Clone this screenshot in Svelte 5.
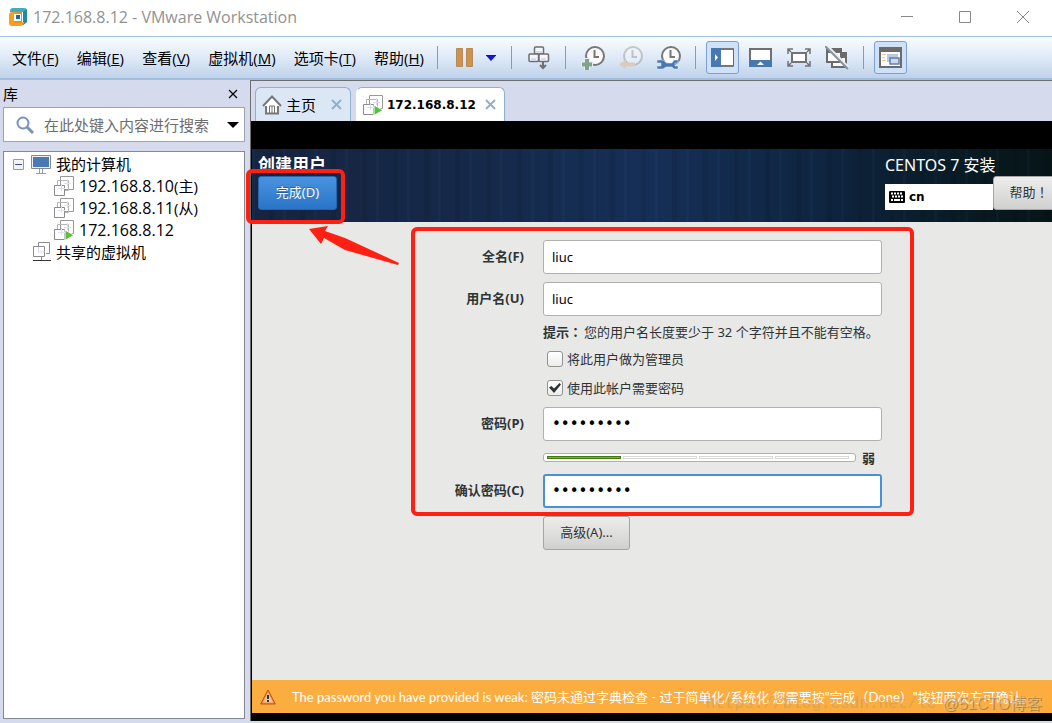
<script lang="ts">
	const menus = [
		{ label: '文件', key: 'F' },
		{ label: '编辑', key: 'E' },
		{ label: '查看', key: 'V' },
		{ label: '虚拟机', key: 'M' },
		{ label: '选项卡', key: 'T' },
		{ label: '帮助', key: 'H' }
	];

	const machines = [
		{ ip: '192.168.8.10', role: '(主)', running: false },
		{ ip: '192.168.8.11', role: '(从)', running: false },
		{ ip: '172.168.8.12', role: '', running: true }
	];

	let fullName = $state('liuc');
	let userName = $state('liuc');
	let password = $state('liuc12345');
	let confirm = $state('liuc12345');
	let isAdmin = $state(false);
	let needsPassword = $state(true);

	// Filled segments of the strength bar, out of four
	const strength = 1;
</script>

{#snippet vmIcon(running: boolean)}
	<svg width="20" height="20" viewBox="0 0 20 20" fill="none" aria-hidden="true">
		<path d="M6.500 9V.500h13v13H11" fill="#fff" stroke="#999" />
		<path d="M3.500 9V4.500h11v10H11" stroke="#b5b5b5" />
		<path d="M.500 9.500h10v10H.500z" fill="#fff" stroke="#8c8c8c" />
		<path d="M7.500 8v7M4 12.500h7M13.500 3v7M10 7.500h7" stroke="#dde0f4" />
		{#if running}
			<path d="M11 10v10.500l9-5.250z" fill="#5abf3c" stroke="#fff" />
		{/if}
	</svg>
{/snippet}

{#snippet clock(faded: boolean)}
	<g opacity={faded ? 0.35 : 1}>
		<circle cx="14" cy="10" r="9" fill="#fafafa" stroke="#777" stroke-width="2" />
		<path d="M13.500 4v7H18" stroke="#777" stroke-width="2" />
	</g>
{/snippet}

<div class="window">
	<header class="titlebar">
		<svg width="20" height="20" viewBox="0 0 20 20" fill="none" aria-hidden="true">
			<path d="M5 1h11q3 0 3 3v11l-4 3V5H2V4q0-3 3-3z" fill="#3fabc4" />
			<path d="M15 5l4-3v13l-4 3z" fill="#1f8ba6" />
			<path d="M4 5h10v4H6v6h10v1q-1 3-4 3H4q-3 0-3-3V8q0-3 3-3z" fill="#f6a11d" />
			<path d="M7 5h7v11H6v-4h4V8H7z" fill="#ee8d17" />
			<path d="M6 7h7v7H6z" fill="#fff" />
			<path d="M8 8h4v4H8z" fill="#176f91" />
		</svg>
		<h1>172.168.8.12 - VMware Workstation</h1>
		<div class="window-controls">
			<button aria-label="最小化"><svg width="14" height="14" viewBox="0 0 14 14"><path d="M1 6.500h12" /></svg></button>
			<button aria-label="最大化"><svg width="14" height="14" viewBox="0 0 14 14"><path d="M1.500 1.500h11v11h-11z" /></svg></button>
			<button aria-label="关闭"><svg width="14" height="14" viewBox="0 0 14 14"><path d="M1 1l12 12M13 1L1 13" /></svg></button>
		</div>
	</header>

	<div class="menubar">
		<nav>
			{#each menus as { label, key }}
				<button class="menu">{label}(<u>{key}</u>)</button>
			{/each}
		</nav>
		<span class="sep"></span>
		<div class="tools">
			<button class="tool" aria-label="挂起">
				<svg width="18" height="20" viewBox="0 0 18 20"><path d="M.5.5h6v18h-6zM10.500.5h6v18h-6z" fill="#d2914a" stroke="#b58a5c" /></svg>
			</button>
			<button class="tool-caret" aria-label="电源选项">
				<svg width="10" height="6" viewBox="0 0 10 6"><path d="M0 .5h10L5 6z" fill="#1515d8" /><path d="M0 .5h10" stroke="#223" /></svg>
			</button>
		</div>
		<span class="sep"></span>
		<button class="tool" aria-label="发送 Ctrl+Alt+Del">
			<svg width="22" height="24" viewBox="0 0 22 24" fill="#f4f6fc" stroke="#6f6f6f" stroke-width="1.500">
				<rect x="6.500" y="1" width="9" height="7" rx="1" />
				<rect x="1" y="8" width="9.500" height="7.500" rx="1" />
				<rect x="11" y="8" width="9.500" height="7.500" rx="1" />
				<path d="M15 16v6M12 19l3 3 3-3" fill="none" stroke-width="2" />
				<path d="M8 6h6M3 13h5M13 13h5" stroke="#cbd5ee" />
			</svg>
		</button>
		<span class="sep"></span>
		<div class="tools">
			<button class="tool" aria-label="拍摄快照">
				<svg width="24" height="24" viewBox="0 0 24 24" fill="none">
					{@render clock(false)}
					<path d="M6 12v12M0 18h12" stroke="#e8eef8" stroke-width="6" />
					<path d="M6 13v11M1 18.500h10" stroke="#7fa48b" stroke-width="4" />
				</svg>
			</button>
			<button class="tool" aria-label="恢复快照">
				<svg width="24" height="24" viewBox="0 0 24 24" fill="none">
					{@render clock(true)}
					<path d="M0 18.500l7-5v3h9v4H7v3z" fill="#dccbbd" />
				</svg>
			</button>
			<button class="tool" aria-label="管理快照">
				<svg width="24" height="24" viewBox="0 0 24 24" fill="none">
					{@render clock(false)}
					<path d="M0 14h6l3 3h6l2-3h4v3h-3v3h3v3h-4l-2-2H9l-3 2H0v-3h4v-3H0z" fill="#4779b0" stroke="#dfe8f5" stroke-width=".5" />
				</svg>
			</button>
		</div>
		<span class="sep"></span>
		<div class="tools">
			<button class="tool pressed" aria-label="显示库">
				<svg width="23" height="20" viewBox="0 0 23 20"><path d="M.5.500h22v18H.5z" fill="#fff" stroke="#666" /><path d="M0 0h10v19H0z" fill="#4779b0" /><path d="M10 1h12M10 18h12" stroke="#777" stroke-width="2" /><path d="M4 6l3 3.500L4 13z" fill="#fff" /></svg>
			</button>
			<button class="tool" aria-label="显示缩略图">
				<svg width="23" height="20" viewBox="0 0 23 20"><path d="M1 1h21v17H1z" fill="#fff" stroke="#707070" stroke-width="2" /><path d="M0 12h23v7H0z" fill="#4779b0" /><path d="M8 17l3.500-3.500L15 17z" fill="#fff" /></svg>
			</button>
			<button class="tool" aria-label="全屏">
				<svg width="24" height="20" viewBox="0 0 24 20" fill="none" stroke="#737373" stroke-width="2"><rect x="5" y="5" width="14" height="9" fill="#fff" /><path d="M1 6V1h5M1 1l3 3M18 1h5v5M23 1l-3 3M1 13v5h5M1 18l3-3M18 18h5v-5M23 18l-3-3" stroke-width="1.500" /></svg>
			</button>
			<button class="tool" aria-label="Unity">
				<svg width="24" height="24" viewBox="0 0 24 24"><path d="M7 7h14v14H7z" fill="#fff" stroke="#6b6b6b" stroke-width="2" /><path d="M6 6h16v6H6z" fill="#6b6b6b" /><path d="M2 3h14v13H2z" fill="#fff" stroke="#6b6b6b" stroke-width="2" /><path d="M1 2h16v5H1z" fill="#6b6b6b" /><path d="M2 0l22 22" stroke="#e8eef7" stroke-width="3" /><path d="M0 0l23 23" stroke="#8a929c" stroke-width="2" /></svg>
			</button>
		</div>
		<span class="sep"></span>
		<button class="tool pressed" aria-label="控制台视图">
			<svg width="23" height="21" viewBox="0 0 23 21"><path d="M1 1h21v19H1z" fill="#fff" stroke="#6b6b6b" stroke-width="2" /><path d="M0 0h23v5H0z" fill="#6b6b6b" /><path d="M3 7.500h4M3 10.500h3M3 13.500h4" stroke="#eac987" /><path d="M8 7h11v8H8z" fill="#b9cae2" /><path d="M11 11h9v6h-9z" fill="#c9d9ee" stroke="#6280ac" stroke-width="1.500" /></svg>
		</button>
	</div>

	<div class="workspace">
		<aside>
			<div class="library-head">
				<h2>库</h2>
				<button aria-label="关闭库">
					<svg width="10" height="10" viewBox="0 0 10 10"><path d="M1 1l8 8M9 1L1 9" stroke="#000" stroke-width="1.200" /></svg>
				</button>
			</div>
			<div class="search">
				<svg width="20" height="20" viewBox="0 0 20 20" fill="none"><circle cx="8" cy="8" r="5.500" stroke="#7b92b8" stroke-width="2" /><path d="M12 12l6 6" stroke="#7b92b8" stroke-width="3" /></svg>
				<input type="text" aria-label="搜索" placeholder="在此处键入内容进行搜索" />
				<button aria-label="搜索选项"><svg width="12" height="6" viewBox="0 0 12 6"><path d="M0 0h12L6 6z" /></svg></button>
			</div>
			<ul class="tree">
				<li class="root">
					<svg class="toggle" width="11" height="11" viewBox="0 0 11 11"><path d="M.5.500h10v10H.5z" fill="#f4f4f4" stroke="#999" /><path d="M2 5.500h7" stroke="#3b4fa0" /></svg>
					<svg width="20" height="20" viewBox="0 0 20 20"><path d="M.5 1.500h19v13H.5z" fill="#eee" stroke="#888" /><path d="M2 3h16v10H2z" fill="#4a7ab3" /><path d="M8.500 15v4M11.500 15v4M5 19.500h10" stroke="#999" /></svg>
					<span>我的计算机</span>
				</li>
				{#each machines as vm}
					<li class="child">
						{@render vmIcon(vm.running)}
						<span class="ip">{vm.ip}<span>{vm.role}</span></span>
					</li>
				{/each}
				<li class="shared">
					<svg width="18" height="20" viewBox="0 0 18 20" fill="none"><path d="M5.500 4V.5h11v11H13" stroke="#8c8c8c" /><path d="M.5 4.500h11v10H.5z" stroke="#8c8c8c" /><path d="M5.500 5v5h6" stroke="#d5d9ee" /><path d="M8.500 15v3" stroke="#888" /><path d="M0 18.500h18" stroke="#333" /></svg>
					<span>共享的虚拟机</span>
				</li>
			</ul>
		</aside>

		<main>
			<div class="tabs">
				<div class="tab">
					<svg width="20" height="20" viewBox="0 0 20 20" fill="none" stroke="#777"><path d="M4 9v9.500h12V9" fill="#fff" stroke-width="2" /><path d="M1 11l9-9.500 9 9.500" fill="#fff" stroke-width="2" /><path d="M7.500 18v-7h5v7M10 11v7" /></svg>
					<span>主页</span>
					<button aria-label="关闭主页"><svg width="11" height="11" viewBox="0 0 11 11"><path d="M1 1l9 9M10 1l-9 9" /></svg></button>
				</div>
				<div class="tab active">
					{@render vmIcon(true)}
					<span>172.168.8.12</span>
					<button aria-label="关闭 172.168.8.12"><svg width="11" height="11" viewBox="0 0 11 11"><path d="M1 1l9 9M10 1l-9 9" /></svg></button>
				</div>
			</div>

			<div class="console">
				<div class="screen">
					<div class="spoke-head">
						<div>
							<h3>创建用户</h3>
							<button class="done">完成(D)</button>
						</div>
						<div class="product">
							<p>CENTOS 7 安装</p>
							<div class="layout-row">
								<div class="keyboard">
									<svg width="16" height="12" viewBox="0 0 16 12"><rect width="16" height="12" rx="1" /><path d="M2 2.500h12M3 5.500h11" stroke="#fff" stroke-width="2" stroke-dasharray="2 1" /><path d="M2 9h2M5 9h6M12 9h2" stroke="#fff" stroke-width="2" /></svg>
									<span>cn</span>
								</div>
								<button class="gtk-button help">帮助！</button>
							</div>
						</div>
					</div>

					<form onsubmit={(e) => e.preventDefault()}>
						<div class="fields">
							<label for="full-name">全名(F)</label>
							<input id="full-name" type="text" bind:value={fullName} />

							<label for="user-name">用户名(U)</label>
							<input id="user-name" type="text" bind:value={userName} />

							<p class="hint"><b>提示：</b>您的用户名长度要少于 32 个字符并且不能有空格。</p>
							<label class="check"><input type="checkbox" bind:checked={isAdmin} />将此用户做为管理员</label>
							<label class="check"><input type="checkbox" bind:checked={needsPassword} />使用此帐户需要密码</label>

							<label for="password">密码(P)</label>
							<input id="password" type="password" bind:value={password} />

							<div class="strength">
								<div class="bar" role="meter" aria-label="密码强度" aria-valuemin="0" aria-valuemax="4" aria-valuenow={strength}>
									{#each [0, 1, 2, 3] as level}
										<span class:filled={level < strength}></span>
									{/each}
								</div>
								<b>弱</b>
							</div>

							<label for="confirm">确认密码(C)</label>
							<input id="confirm" class="focused" type="password" bind:value={confirm} />
						</div>
						<button type="button" class="gtk-button advanced">高级(A)...</button>
					</form>

					<div class="warning">
						<svg width="16" height="16" viewBox="0 0 16 16"><path d="M8 1l7.300 14H.7z" fill="#f08a3c" stroke="#b9541a" stroke-linejoin="round" /><path d="M8 3.500l5 10H3z" fill="#f7c9a0" /><path d="M7 6h2v4H7zM7 11h2v2H7z" fill="#333" /></svg>
						<p>The password you have provided is weak: 密码未通过字典检查 - 过于简单化/系统化 您需要按"完成（Done）"按钮两次方可确认。</p>
					</div>

					<div class="done-mark"></div>
					<svg class="arrow" width="92" height="40" viewBox="0 0 92 40"><path d="M0 3L19 0l-3 5 20 7 54 25-1 2-53-15-21-12-3 6z" fill="#ff2013" /></svg>
					<span class="mark-url">https://blog.csdn.net/lc</span>
					<span class="mark-site">@51CTO博客</span>
				</div>
			</div>
		</main>
	</div>
</div>

<style>
	:global(body) {
		margin: 0;
	}

	h1, h2, h3, p, ul {
		margin: 0;
		padding: 0;
		font-weight: 400;
	}

	button {
		padding: 0;
		border: 0;
		background: none;
		font: inherit;
		color: inherit;
	}

	svg {
		display: block;
		flex: none;
	}

	.window {
		display: flex;
		flex-direction: column;
		box-sizing: border-box;
		min-height: 100vh;
		background: #d5daec;
		font-family: "Open Sans", "Noto Sans CJK SC", sans-serif;
		font-size: 15px;
		line-height: 22px;
		color: #000;
		white-space: nowrap;
	}

	.titlebar {
		display: flex;
		align-items: center;
		box-sizing: border-box;
		height: 37px;
		padding: 0 22px 2px 8px;
		background: #fff;
		border-bottom: 1px solid #a0c0de;
	}

	.titlebar h1 {
		flex: 1;
		margin-left: 5px;
		font-size: 16px;
		color: #929292;
	}

	.window-controls {
		display: flex;
		gap: 44px;
	}

	.window-controls path {
		fill: none;
		stroke: #888;
	}

	/* Menus and toolbar */
	.menubar {
		display: flex;
		align-items: center;
		height: 41px;
		padding-left: 12px;
		background: linear-gradient(#f8fcfe, #dfeaf7 50%, #bfd2eb);
		border-bottom: 2px solid #a3bedd;
	}

	nav {
		display: flex;
		justify-content: space-between;
		width: 412px;
		margin-right: 3px;
	}

	.sep {
		flex: none;
		width: 1px;
		height: 23px;
		margin: 0 10px;
		background: #7b9dcb;
	}

	.tools {
		display: flex;
		gap: 5px;
	}

	.tool {
		display: flex;
		flex: none;
		align-items: center;
		justify-content: center;
		box-sizing: border-box;
		width: 33px;
		height: 33px;
	}

	.tool-caret {
		width: 15px;
	}

	.tool.pressed {
		border: 1px solid #7ba0d2;
		border-radius: 3px;
		background: #cfe1f8;
	}

	/* Library */
	.workspace {
		display: flex;
		flex: 1;
	}

	aside {
		display: flex;
		flex: none;
		flex-direction: column;
		box-sizing: border-box;
		width: 250px;
		padding: 0 5px 4px 3px;
	}

	.library-head {
		display: flex;
		align-items: center;
		justify-content: space-between;
		height: 27px;
		padding-right: 7px;
	}

	.library-head h2 {
		font-size: 15px;
	}

	.search {
		display: flex;
		align-items: center;
		box-sizing: border-box;
		height: 35px;
		padding: 0 5px 0 11px;
		border: 1px solid #9da3ad;
		background: #fff;
	}

	.search input {
		flex: 1;
		min-width: 0;
		margin-left: 9px;
		padding: 0;
		border: 0;
		outline: 0;
		background: none;
		font: inherit;
	}

	.search input::placeholder {
		color: #6d6d6d;
	}

	.tree {
		flex: 1;
		margin-top: 9px;
		padding-top: 1px;
		border: 1px solid #828790;
		background: #fff;
		list-style: none;
	}

	.tree li {
		display: flex;
		align-items: center;
		gap: 5px;
		height: 22px;
	}

	.tree .root {
		padding-left: 9px;
	}

	.toggle {
		margin-right: 2px;
	}

	.tree .child {
		padding-left: 50px;
	}

	.tree .shared {
		padding-left: 29px;
	}

	.ip {
		font-size: 16px;
	}

	.ip span {
		font-size: 15px;
	}

	/* Tabs */
	main {
		display: flex;
		flex: 1;
		flex-direction: column;
		min-width: 0;
		margin-bottom: 2px;
		border-top: 1px solid #6d6d6d;
		border-left: 1px solid #6d6d6d;
	}

	.tabs {
		display: flex;
		gap: 5px;
		padding: 6px 4px 0;
	}

	.tab {
		display: flex;
		align-items: center;
		box-sizing: border-box;
		height: 34px;
		padding: 0 8px 0 6px;
		border: 1px solid #8fb0cc;
		border-bottom: 0;
		border-radius: 6px 6px 0 0;
		background: #dbe7f4;
	}

	.tab span {
		margin: 0 15px 0 4px;
	}

	.tab button path {
		stroke: #8fb0cf;
		stroke-width: 2;
	}

	.tab.active {
		background: #fff;
		border-left-color: #fff;
	}

	.tab.active span {
		margin-right: 9px;
		font-family: "DejaVu Sans", sans-serif;
		font-size: 12px;
		font-weight: 700;
	}

	/* Guest display */
	.console {
		display: flex;
		flex: 1;
		padding: 28px 0 8px 1px;
		background: #000;
	}

	.screen {
		position: relative;
		display: flex;
		flex: 1;
		flex-direction: column;
		min-width: 0;
		background: #e8e8e6;
		font-family: "Noto Sans", "Noto Sans CJK SC", sans-serif;
		font-size: 13px;
		color: #2e3436;
	}

	.spoke-head {
		display: flex;
		justify-content: space-between;
		box-sizing: border-box;
		height: 73px;
		padding: 5px 0 0 6px;
		background:
			repeating-linear-gradient(90deg, rgba(60, 110, 170, 0.06) 0 3px, transparent 3px 17px, rgba(0, 0, 0, 0.08) 17px 22px, transparent 22px 31px),
			linear-gradient(90deg, #172440, #15294a 28%, #162f57 50%, #0e243f 72%, #08191f 92%, #061518);
		color: #fff;
	}

	.spoke-head h3 {
		font-size: 17px;
		font-weight: 700;
	}

	.done {
		box-sizing: border-box;
		width: 79px;
		height: 34px;
		padding-bottom: 2px;
		border: 1px solid #2467b0;
		border-radius: 3px;
		background: linear-gradient(#4a93df, #2a74c8);
		text-shadow: 0 -1px rgba(0, 0, 0, 0.3);
	}

	.product {
		width: 167px;
		overflow: hidden;
	}

	.product p {
		font-size: 16px;
	}

	.layout-row {
		display: flex;
		align-items: flex-start;
	}

	.keyboard {
		display: flex;
		flex: none;
		align-items: center;
		gap: 4px;
		box-sizing: border-box;
		width: 108px;
		height: 26px;
		margin-top: 8px;
		padding-left: 4px;
		background: #fff;
		color: #000;
		font-family: "DejaVu Sans", sans-serif;
		font-size: 12px;
		font-weight: 700;
	}

	.gtk-button {
		box-sizing: border-box;
		height: 34px;
		padding-bottom: 2px;
		border: 1px solid #a5a5a1;
		border-radius: 3px;
		background: linear-gradient(#ededec, #d0d0ce);
		color: #2e3436;
	}

	.help {
		flex: none;
		width: 72px;
		font-family: "Noto Sans CJK TC", sans-serif;
	}

	form {
		flex: 1;
		padding: 5px 0 20px 159px;
	}

	.fields {
		display: grid;
		grid-template-columns: 109px 339px;
		grid-template-rows: 42px 36px 27px 29px 33px 34px 33px 34px;
		column-gap: 19px;
		width: max-content;
		padding: 9px 28px 4px 0;
		border: 4px solid #ff2013;
		border-radius: 6px;
	}

	.fields > label {
		line-height: 32px;
		font-weight: 700;
		text-align: right;
	}

	.fields > input {
		box-sizing: border-box;
		width: 100%;
		height: 34px;
		padding: 0 8px;
		border: 1px solid #b0b0ac;
		border-radius: 3px;
		outline: 0;
		background: #fff;
		font: inherit;
		color: #000;
	}

	.fields > input[type='password'] {
		font-family: "DejaVu Sans", sans-serif;
		font-size: 15px;
	}

	.fields > input.focused {
		padding: 0 7px;
		border: 2px solid #4a90d9;
	}

	.hint,
	.strength,
	.fields > .check {
		grid-column: 2;
	}

	.hint {
		line-height: 28px;
	}

	.hint b {
		margin-right: 2px;
		font-family: "Noto Sans CJK TC", sans-serif;
	}

	.fields > .check {
		display: flex;
		align-items: center;
		gap: 4px;
		height: 28px;
		padding-left: 4px;
		line-height: 28px;
		font-weight: 400;
	}

	.check input {
		display: grid;
		place-items: center;
		box-sizing: border-box;
		width: 16px;
		height: 16px;
		margin: 0;
		appearance: none;
		border: 1px solid #92928e;
		border-radius: 3px;
		background: linear-gradient(#fff, #ececea);
	}

	.check input:checked::before {
		content: '';
		width: 12px;
		height: 10px;
		background: #2e3436;
		clip-path: polygon(0 45%, 20% 30%, 42% 55%, 88% 0, 100% 15%, 42% 100%);
	}

	.strength {
		display: flex;
		align-items: center;
		gap: 6px;
	}

	.bar {
		display: grid;
		grid-template-columns: repeat(4, 1fr);
		gap: 2px;
		box-sizing: border-box;
		width: 313px;
		height: 9px;
		padding: 2px 6px 2px 3px;
		border: 1px solid #b0b0ac;
		border-radius: 3px;
		background: #fff;
	}

	.bar span {
		border: 1px solid #d8d8d6;
	}

	.bar span.filled {
		border-color: #3e7a10;
		background: #6cc01c;
	}

	.advanced {
		display: block;
		width: 87px;
		margin-left: 132px;
	}

	.warning {
		display: flex;
		align-items: center;
		gap: 16px;
		height: 33px;
		padding-left: 8px;
		overflow: hidden;
		background: #fbad3f;
		font-family: Lato, "Noto Sans CJK SC", sans-serif;
		color: #fff;
	}

	/* Annotations drawn over the guest display */
	.done-mark {
		position: absolute;
		top: 20px;
		left: -6px;
		box-sizing: border-box;
		width: 99px;
		height: 55px;
		border: 4px solid #ff2013;
		border-radius: 6px;
	}

	.arrow {
		position: absolute;
		top: 77px;
		left: 57px;
	}

	.mark-url,
	.mark-site {
		position: absolute;
		bottom: -2px;
		color: rgba(170, 150, 120, 0.4);
	}

	.mark-url {
		right: 116px;
		font-family: "Liberation Mono", monospace;
		font-size: 16px;
	}

	.mark-site {
		right: 10px;
		font-family: "Liberation Sans", "Noto Sans CJK SC", sans-serif;
		font-size: 16px;
		color: rgba(225, 195, 150, 0.6);
		text-shadow: 1px 1px rgba(110, 90, 60, 0.5);
	}
</style>
